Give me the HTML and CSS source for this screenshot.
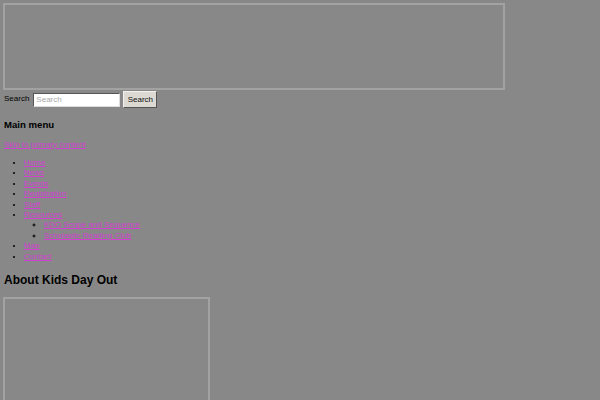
FILE: index.html
```html
<!DOCTYPE html>
<html>
<head>
<meta charset="utf-8">
<title>Kids Day Out</title>
<link rel="stylesheet" href="styles.css">
</head>
<body>
<div class="banner"></div>
<form class="search">
  <label class="search-label">Search</label>
  <input class="search-input" type="text" placeholder="Search">
  <button class="search-btn" type="button">Search</button>
</form>
<h3 class="menu-title">Main menu</h3>
<a class="skip" href="#">Skip to primary content</a>
<ul class="menu">
  <li><a href="#">Home</a></li>
  <li><a href="#">News</a></li>
  <li><a href="#">Events</a></li>
  <li><a href="#">Registration</a></li>
  <li><a href="#">Staff</a></li>
  <li><a href="#">Resources</a>
    <ul class="submenu">
      <li><a href="#">KDO Scope and Sequence</a></li>
      <li><a href="#">Scholastic Reading Club</a></li>
    </ul>
  </li>
  <li><a href="#">Map</a></li>
  <li><a href="#">Contact</a></li>
</ul>
<h2 class="about">About Kids Day Out</h2>
<div class="photo"></div>
</body>
</html>
```
FILE: styles.css
```css
html, body {
  background: #888888;
}
body {
  margin: 0;
  padding: 3px;
  font-family: "Liberation Sans", Arial, sans-serif;
  font-size: 8px;
  line-height: 10.4px;
  color: #000;
}
.banner {
  box-sizing: border-box;
  width: 502px;
  height: 87px;
  border: 2px solid #a2a2a2;
}
.search {
  display: flex;
  align-items: center;
  margin: 1px 0 0 1px;
  height: 17px;
}
.search-label {
  margin-right: 4px;
}
.search-input {
  box-sizing: border-box;
  width: 87px;
  height: 14px;
  padding: 0 2px;
  margin: 0;
  border: 1px solid;
  border-color: #555 #ddd #ddd #555;
  background: #fff;
  font-family: "Liberation Sans", Arial, sans-serif;
  font-size: 8px;
}
.search-input::placeholder {
  color: #a9a9a9;
}
.search-btn {
  box-sizing: border-box;
  width: 34px;
  height: 17px;
  margin: 0 0 0 3px;
  padding: 0;
  border: 1px solid;
  border-color: #f4f2ee #555 #555 #f4f2ee;
  background: #dcd9d2;
  font-family: "Liberation Sans", Arial, sans-serif;
  font-size: 8px;
  color: #111;
}
.menu-title {
  margin: 10.5px 0 0 1px;
  font-size: 9.6px;
  line-height: 11px;
  font-weight: bold;
}
.skip {
  display: block;
  margin: 10.3px 0 0 1px;
}
a {
  color: #d23fd2;
}
.menu {
  margin: 7.8px 0 0 0;
  padding-left: 21px;
  list-style: disc;
}
.submenu {
  margin: 0;
  padding-left: 20px;
  list-style: circle;
}
.about {
  margin: 11px 0 0 1px;
  font-size: 12px;
  line-height: 14px;
  font-weight: bold;
}
.photo {
  box-sizing: border-box;
  width: 207px;
  height: 160px;
  margin-top: 10px;
  border: 2px solid #a2a2a2;
}
```
